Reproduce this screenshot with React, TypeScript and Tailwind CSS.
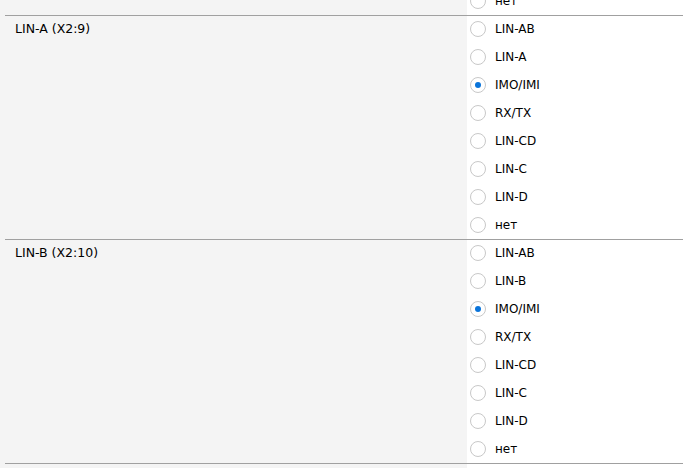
import React from 'react';

type Group = { label: string; options: string[]; selected: string };

const GROUPS: Group[] = [
  { label: 'LIN-A (X2:9)', options: ['LIN-AB', 'LIN-A', 'IMO/IMI', 'RX/TX', 'LIN-CD', 'LIN-C', 'LIN-D', 'нет'], selected: 'IMO/IMI' },
  { label: 'LIN-B (X2:10)', options: ['LIN-AB', 'LIN-B', 'IMO/IMI', 'RX/TX', 'LIN-CD', 'LIN-C', 'LIN-D', 'нет'], selected: 'IMO/IMI' },
  { label: 'LIN-C (X2:11)', options: ['LIN-AB', 'LIN-C', 'нет'], selected: 'нет' },
];

function Radio({ label, checked }: { label: string; checked: boolean }) {
  return (
    <div className="flex h-[28px] items-center">
      <span className="ml-[3px] flex h-[16px] w-[16px] items-center justify-center rounded-full border border-[#c8c8c8] bg-white">
        {checked && <span className="h-[6px] w-[6px] rounded-full bg-[#0a74da]" />}
      </span>
      <span className="ml-[9px] text-[12px] text-black">{label}</span>
    </div>
  );
}

function Section({ group }: { group: Group }) {
  return (
    <div className="ml-[5px] flex shadow-[inset_0_1px_0_#a0a0a0]">
      <div className="w-[462px] pl-[10px] pt-[5px] text-[12.5px] text-black">{group.label}</div>
      <div className="flex-1 bg-white shadow-[inset_0_1px_0_#a0a0a0]">
        {group.options.map((o) => (
          <Radio key={o} label={o} checked={o === group.selected} />
        ))}
      </div>
    </div>
  );
}

export default function App() {
  return (
    <div className="h-[468px] w-full overflow-hidden bg-[#f4f4f4]" style={{ fontFamily: '"DejaVu Sans", Verdana, sans-serif' }}>
      <div className="-mt-[13px]">
        {/* tail of the previous group */}
        <div className="ml-[5px] flex">
          <div className="w-[462px]" />
          <div className="flex-1 bg-white">
            <Radio label="нет" checked={false} />
          </div>
        </div>
        {GROUPS.map((g) => (
          <Section key={g.label} group={g} />
        ))}
      </div>
    </div>
  );
}
